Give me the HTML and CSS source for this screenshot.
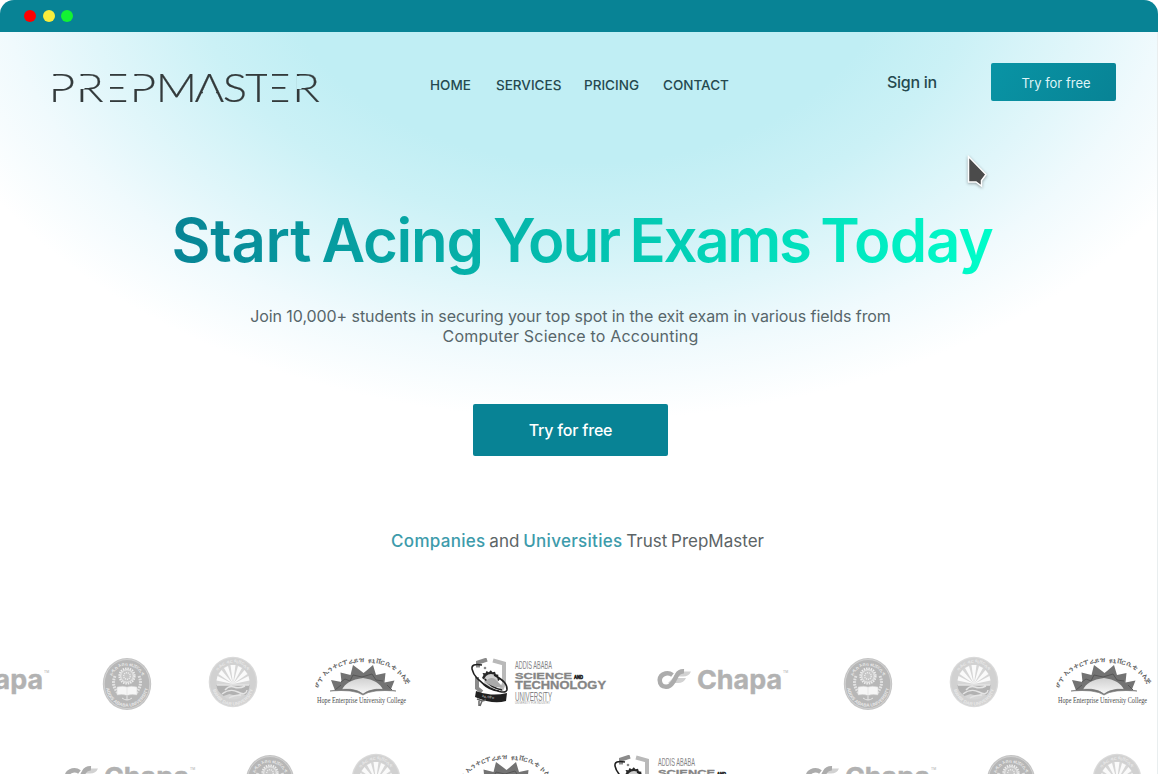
FILE: index.html
```html
<!DOCTYPE html>
<html lang="en">
<head>
<meta charset="utf-8">
<title>PrepMaster</title>
<link rel="stylesheet" href="styles.css">
</head>
<body>
<svg class="defs" width="0" height="0" aria-hidden="true">
  <defs>
    <symbol id="seal" viewBox="0 0 50 54">
      <ellipse cx="25" cy="27" rx="24.2" ry="26" fill="#c4c4c4"/>
      <ellipse cx="25" cy="27" rx="22.8" ry="24.5" fill="#b7b7b7" stroke="#dedede" stroke-width=".6"/>
      <path id="sealTop" d="M8 27a17 18.500 0 0 1 34 0" fill="none"/>
      <path id="sealBottom" d="M3.800 30a21.300 22 0 0 0 42.400 0" fill="none"/>
      <text class="seal-text"><textPath href="#sealTop" startOffset="50%" text-anchor="middle">አዲስ አበባ ዩኒቨርሲቲ</textPath></text>
      <text class="seal-text"><textPath href="#sealBottom" startOffset="50%" text-anchor="middle">ADDIS ABABA UNIVERSITY</textPath></text>
      <circle cx="25" cy="19" r="7.600" fill="none" stroke="#ededed" stroke-width="2" stroke-dasharray="1.500 .9"/>
      <circle cx="25" cy="19" r="6.300" fill="#c6c6c6" stroke="#eee" stroke-width="1"/>
      <circle cx="25" cy="19" r="3.300" fill="none" stroke="#eee" stroke-width="1.300" stroke-dasharray="1.200 .8"/>
      <path d="M13 19q-4 9 3 17M37 19q4 9-3 17" fill="none" stroke="#e3e3e3" stroke-width="3" stroke-dasharray="1.700 1"/>
      <path d="M15 30q6-1.500 10 0q4-1.500 10 0v8q-6-1-10 .5q-4-1.500-10-.5z" fill="#f6f6f6" stroke="#d0d0d0" stroke-width=".5"/>
      <path d="M25 30v8M20 41q5 4 10 0M25 39v4" fill="none" stroke="#e6e6e6"/>
    </symbol>
    <symbol id="sun" viewBox="0 0 50 52">
      <ellipse cx="25" cy="26" rx="24.300" ry="25.300" fill="#dadada"/>
      <ellipse cx="25" cy="26" rx="23" ry="24" fill="#d1d1d1"/>
      <ellipse cx="25" cy="26" rx="16.500" ry="17.500" fill="#d6d6d6"/>
      <path d="M25 28L22.500 9h5zM25 28L30 10l4 2zM25 28L36.500 14l3 4zM25 28L40.500 20l1 4.500zM25 28L20 10l-4 2zM25 28L13.500 14l-3 4zM25 28L9.500 20l-1 4.500z" fill="#fafafa"/>
      <path d="M8.500 29h33q0 6-4 10l-5-2-4 3-7-2-6 2q-7-5-7-11z" fill="#b1b1b1"/>
      <path d="M9 29h32M17 34q4-5 9-3t11-1M14 38q8-6 16-2t9-2M21 42q5-3 12-3" fill="none" stroke="#e4e4e4" stroke-width="1.400"/>
      <path id="sunTop" d="M6.500 26a18.500 19.500 0 0 1 37 0" fill="none"/>
      <path id="sunBottom" d="M4 28a21 21.500 0 0 0 42 0" fill="none"/>
      <text class="seal-text"><textPath href="#sunTop" startOffset="50%" text-anchor="middle">ባሕር ዳር ዩኒቨርሲቲ</textPath></text>
      <text class="seal-text"><textPath href="#sunBottom" startOffset="50%" text-anchor="middle">BAHIR DAR UNIVERSITY</textPath></text>
    </symbol>
    <symbol id="hope" viewBox="0 0 96 50">
      <linearGradient id="hopeSun" x1="0" y1="0" x2="0" y2="1"><stop offset="0" stop-color="#d0d0d0"/><stop offset="1" stop-color="#f6f6f6"/></linearGradient>
      <path id="hopeArc" d="M3 32Q14 6 48 6.500Q82 6 94 32" fill="none"/>
      <text class="hope-arc"><textPath href="#hopeArc" startOffset="0" textLength="107">ሆፕ ኢንተርፕራይዝ ዩኒቨርሲቲ ኮሌጅ</textPath></text>
      <path d="M16 24l10.500 2-1-9.500 10 2.500 2.500-10 8 6 2.500 2 2.500-2 7-6 3 10 9.500-2-1 9.500 10-2-4 10H20z" fill="#737373"/>
      <path d="M26 26l4-3 5 2 3-6 9 2 10-3 4 6 7 1M20 34l6-5M72 29l5 5" fill="none" stroke="#565656"/>
      <path d="M27 34Q31 24 48 22q16 2 20 12q-12-1-20 3.500q-8-4.500-21-3.500z" fill="url(#hopeSun)"/>
      <path d="M15 35q24-5 33 3q10-8 33-3q-24-2-33 4q-9-6-33-4z" fill="#777" stroke="#777" stroke-width=".6"/>
      <text class="hope-name" x="2" y="46.500" textLength="89" lengthAdjust="spacingAndGlyphs">Hope Enterprise University College</text>
    </symbol>
    <symbol id="aastu" viewBox="0 0 138 50">
      <path d="M17 1.500l-9 3v5M7 19v11l5 4" fill="none" stroke="#8b8b8b" stroke-width="4"/>
      <path d="M23 2.500l11 3v20l-3 7" fill="none" stroke="#b9b9b9" stroke-width="4"/>
      <path d="M12 20l1.500-3-1-2 3 .3 1-2.300 2.300 1.300 2-2 1.700 2 2.500-.5.8 2.400 2.600.6-.4 2.500 2 2-3 3-12-2z" fill="#292929"/>
      <circle cx="21" cy="23" r="7" fill="#d0d0d0"/>
      <path d="M12 7Q1 5 2 11q2 10 18 19q15 7 17 2q1-8-13-15M15 21q6 9 17 11M13 26q6 6 16 7" fill="none" stroke="#202020" stroke-width="1.500"/>
      <path d="M15 24q5-6 10-3l8 8q-8 2-18-5z" fill="#aaa"/>
      <circle cx="15" cy="10" r="1.300" fill="#888"/>
      <path d="M6 33q7 3 15 3.500t16-1.500l-1 8q-13 4-31-4z" fill="#202020"/>
      <text class="aastu-ribbon" x="12" y="39.500" transform="rotate(6 12 39)">አአ ሳቴዩ</text>
      <path d="M7 41l5 2-2 5M12 43l4-1M9 43v5" fill="none" stroke="#666" stroke-width="1.500"/>
      <text class="aastu-thin" x="45" y="11.300" textLength="37" lengthAdjust="spacingAndGlyphs">ADDIS ABABA</text>
      <text class="aastu-bold aastu-science" x="45" y="20.500" textLength="57" lengthAdjust="spacingAndGlyphs">SCIENCE</text>
      <text class="aastu-and" x="104" y="20.500" textLength="9" lengthAdjust="spacingAndGlyphs">AND</text>
      <text class="aastu-bold" x="45" y="31.300" textLength="91" lengthAdjust="spacingAndGlyphs">TECHNOLOGY</text>
      <text class="aastu-thin aastu-uni" x="45" y="42.700" textLength="37" lengthAdjust="spacingAndGlyphs">UNIVERSITY</text>
      <text class="aastu-motto" x="45" y="46" textLength="35" lengthAdjust="spacingAndGlyphs">UNIVERSITY FOR INDUSTRY</text>
    </symbol>
    <symbol id="chapa" viewBox="0 0 132 28">
      <path d="M20 3.500h14q-2 5-8 5h-9zM16 10h13q-2 5-8 5H11z" fill="#d2d2d2"/>
      <path d="M15.500 7Q12 4.500 8.500 5.500Q3 7 2.700 12Q3 18.500 9 18.800Q13 19 16.500 13.500L20 7Q22 3 27 3.200" fill="none" stroke="#acacac" stroke-width="4.500"/>
      <text class="chapa-name" x="40" y="21" textLength="85" lengthAdjust="spacingAndGlyphs">Chapa</text>
      <text class="chapa-tm" x="126" y="5">TM</text>
    </symbol>
  </defs>
</svg>

<div class="window">
  <div class="titlebar">
    <span class="dot dot-red"></span><span class="dot dot-yellow"></span><span class="dot dot-green"></span>
  </div>
  <div class="page">
    <header class="header">
      <svg class="brand" width="272" height="36" viewBox="0 0 272 36" role="img" aria-label="PrepMaster">
        <mask id="cuts" maskUnits="userSpaceOnUse" x="0" y="0" width="272" height="36">
          <rect width="272" height="36" fill="#fff"/>
          <path d="M0 7h5v13H0zM27.500 7h5v13h-5zM81.500 7h5v13h-5zM244.500 7h5v13h-5zM53 0h5v36h-5zM215 0h5v36h-5zM153.500 18h8l4 8.500h-16z" fill="#000"/>
        </mask>
        <g mask="url(#cuts)">
          <text class="brand-name" transform="scale(1.150 1)" y="32.500" x="-2.900 20.800 43.400 67.700 90.200 124 148.500 168 184.300 209">PREPMASTER</text>
        </g>
      </svg>
      <nav class="nav">
        <a class="nav-home">HOME</a><a class="nav-services">SERVICES</a><a class="nav-pricing">PRICING</a><a class="nav-contact">CONTACT</a>
      </nav>
      <a class="signin">Sign in</a>
      <a class="button button-small">Try for free</a>
    </header>
    <main class="hero">
      <h1 class="title"><span class="t-start">Start</span> <span class="t-acing">Acing</span> <span class="t-your">Your</span> <span class="t-exams">Exams</span> <span class="t-today">Today</span></h1>
      <p class="lead"><span class="lead-a">Join 10,000+ students in securing your top spot in the exit exam in various fields from</span><br><span class="lead-b">Computer Science to Accounting</span></p>
      <a class="button button-large">Try for free</a>
      <p class="trust"><b>Companies</b> and <b>Universities</b> Trust PrepMaster</p>
    </main>
    <section class="logos">
      <div class="strip">
        <svg class="chapa chapa-first"><use href="#chapa"/></svg>
        <svg class="seal"><use href="#seal"/></svg>
        <svg class="sun"><use href="#sun"/></svg>
        <svg class="hope"><use href="#hope"/></svg>
        <svg class="aastu"><use href="#aastu"/></svg>
        <svg class="chapa"><use href="#chapa"/></svg>
        <svg class="seal"><use href="#seal"/></svg>
        <svg class="sun"><use href="#sun"/></svg>
        <svg class="hope"><use href="#hope"/></svg>
      </div>
      <div class="strip strip-shifted">
        <svg class="chapa"><use href="#chapa"/></svg>
        <svg class="seal"><use href="#seal"/></svg>
        <svg class="sun"><use href="#sun"/></svg>
        <svg class="hope"><use href="#hope"/></svg>
        <svg class="aastu"><use href="#aastu"/></svg>
        <svg class="chapa"><use href="#chapa"/></svg>
        <svg class="seal"><use href="#seal"/></svg>
        <svg class="sun"><use href="#sun"/></svg>
      </div>
    </section>
    <svg class="cursor" width="26" height="38" viewBox="0 0 26 38"><path d="M4.500 2.500V28H12l5.500 4v-5.500l4.500-6z" fill="#4b4b4b" stroke="#fff" stroke-width="1.500"/></svg>
  </div>
</div>
</body>
</html>
```
FILE: styles.css
```css
* { box-sizing: border-box; }
body { margin: 0; background: #fff; font-family: Inter, "Liberation Sans", sans-serif; }
.defs { position: absolute; }
.window { width: 1158px; height: 774px; overflow: hidden; display: flex; flex-direction: column; }
.titlebar { height: 32px; flex: none; background: #088395; border-radius: 14px 14px 0 0; display: flex; align-items: center; gap: 6.500px; padding-left: 24px; }
.dot { width: 12px; height: 12px; border-radius: 50%; }
.dot-red { background: #f00; }
.dot-yellow { background: #f9ed3c; }
.dot-green { background: #13f233; }
.page {
  position: relative; flex: 1; overflow: hidden; border-right: 1px solid #e9eeef;
  background: radial-gradient(ellipse 690px 460px at 585px -72px, #c0eef4 0%, #c0eef4 44%, #cbf1f6 57%, #e0f6fa 73%, #f0fafd 85%, #fff 100%);
}
.header { height: 106px; display: flex; align-items: flex-start; padding: 31px 0 0 52px; color: #25494f; }
.brand { display: block; margin-top: 6px; flex: none; }
.brand-name { font-family: Lato, sans-serif; font-weight: 300; font-size: 39.500px; fill: #333a3b; stroke: #333a3b; stroke-width: .2px; }
.nav { display: flex; margin-left: 106px; width: 457px; padding-top: 13px; font-size: 13.500px; line-height: 18px; font-weight: 500; }
.nav-home { width: 66px; }
.nav-services { width: 88px; }
.nav-pricing { width: 79px; }
.nav a, .signin, .button { white-space: nowrap; }
.signin { width: 104px; padding-top: 8px; font-size: 16px; line-height: 22px; font-weight: 500; letter-spacing: -.3px; }
.button { display: flex; align-items: center; justify-content: center; background: #088395; color: #fff; border-radius: 2px; }
.button-small { width: 125px; height: 38px; padding: 2px 0 0 5px; font-size: 13px; background: linear-gradient(125deg, #0994a5, #088395); color: #def4f6; }
.hero { display: flex; flex-direction: column; align-items: center; width: 1141px; height: 482px; }
.title { margin: 60px 0 0 30px; width: 828px; height: 89px; font-size: 60px; line-height: 84px; font-weight: 600; letter-spacing: -1.200px; word-spacing: -3.500px; white-space: nowrap; color: transparent; background: linear-gradient(100deg, #088395, #00ffca); background-clip: text; -webkit-background-clip: text; }
.t-start { letter-spacing: -.300px; }
.t-acing { letter-spacing: -1.300px; }
.t-your { letter-spacing: -2px; }
.t-exams { letter-spacing: -2.300px; }
.t-today { letter-spacing: -1px; }
.lead { margin: 19px 0 0; text-align: center; font-size: 16px; line-height: 20px; color: #57666a; white-space: nowrap; }
.lead-a { letter-spacing: -.070px; }
.lead-b { letter-spacing: .200px; }
.button-large { margin-top: 58px; width: 195px; height: 52px; flex: none; font-size: 16px; font-weight: 500; letter-spacing: -.2px; }
.trust { margin: 73px 0 0 14px; font-size: 17px; line-height: 24px; color: #5c6466; word-spacing: -1px; }
.trust b { font-weight: 500; color: #3d9bab; letter-spacing: .300px; }
.logos { display: flex; flex-direction: column; gap: 43px; padding-top: 36px; }
.strip { height: 54px; display: flex; align-items: flex-start; margin-left: -84px; }
.strip-shifted { margin-left: 59px; }
.strip svg { flex: none; }
.chapa { width: 132px; height: 28px; margin: 12px 54px 0 0; }
.chapa-first { margin-left: 2px; margin-right: 52px; }
.strip-shifted .chapa { margin-left: 5px; margin-right: 49px; }
.seal { width: 50px; height: 54px; margin: 1px 56px 0 0; }
.sun { width: 50px; height: 52px; margin-right: 57px; }
.hope { width: 96px; height: 50px; margin-right: 59px; }
.aastu { width: 138px; height: 50px; margin: 2px 49px 0 0; }
.seal-text { font: 700 4.600px "Liberation Sans", "Noto Sans", sans-serif; fill: #e8e8e8; }
.hope-arc { font: 700 7px "Liberation Serif", "Noto Sans", serif; fill: #686868; }
.hope-name { font: 8px "Liberation Serif", serif; fill: #4a4a4a; }
.aastu-thin { font: 10px "Liberation Sans", sans-serif; fill: #858585; }
.aastu-uni { font-size: 13px; }
.aastu-bold { font: 700 10.500px "Liberation Sans", sans-serif; fill: #858585; stroke: #858585; stroke-width: .3px; }
.aastu-science { font-size: 9.500px; }
.aastu-and { font: 700 4.500px "Liberation Sans", sans-serif; fill: #222; stroke: #222; stroke-width: .5px; }
.aastu-motto { font: 2.800px "Liberation Sans", sans-serif; fill: #999; }
.aastu-ribbon { font: 4px "Noto Sans", sans-serif; fill: #ddd; }
.chapa-name { font: 700 26px Inter, sans-serif; fill: #b2b2b2; stroke: #b2b2b2; stroke-width: .4px; stroke-linejoin: round; }
.chapa-tm { font: 3.500px "Liberation Sans", sans-serif; fill: #aaa; }
.cursor { position: absolute; left: 964px; top: 122px; filter: drop-shadow(0 1px 1.500px rgba(0, 0, 0, .35)); }
```
